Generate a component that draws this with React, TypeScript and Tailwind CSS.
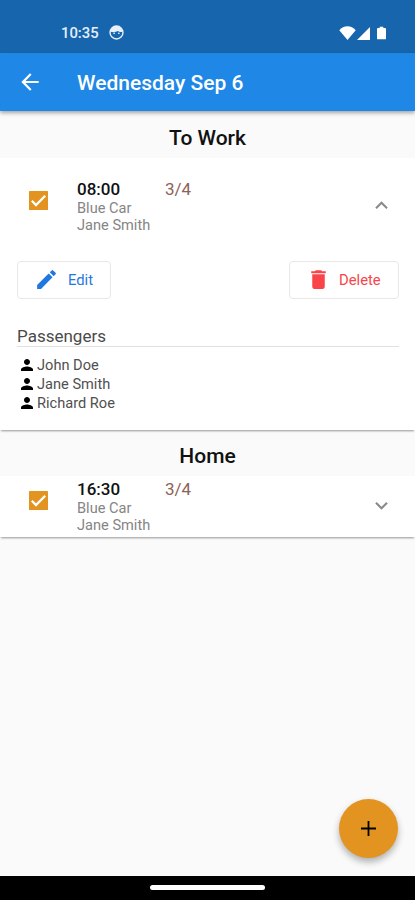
import { MdArrowBack, MdDelete, MdEdit, MdExpandLess, MdExpandMore, MdPerson } from "react-icons/md";

const PASSENGERS = ["John Doe", "Jane Smith", "Richard Roe"];

function StatusBar() {
  return (
    <div className="flex h-[53px] shrink-0 items-center justify-between bg-[#1766ad] pt-[12px] pr-[29px] pl-[61px] text-[#e6effa]">
      <div className="flex items-center gap-[10px]">
        <span className="w-[38px] text-[14.8px] leading-4 font-medium whitespace-nowrap">10:35</span>
        <svg viewBox="0 0 16 16" className="size-[15px]">
          <circle cx="8" cy="8" r="6.9" fill="none" stroke="currentColor" strokeWidth="1.5" />
          <path d="M1.5 7.2C2 3.5 4.5 1 8 1s6 2.500 6.500 6.200c-2.300.5-4 .2-5-.7-2 1.200-5 1.500-8 .7z" fill="currentColor" />
          <circle cx="5.500" cy="8.800" r="0.900" fill="currentColor" />
          <circle cx="10.500" cy="8.800" r="0.900" fill="currentColor" />
        </svg>
      </div>
      <div className="flex items-end text-white">
        <svg viewBox="0 0 17 14" className="h-[14px] w-[17px]" fill="currentColor">
          <path d="M8.500 14 .3 4.300C2.500 1.700 5.300.3 8.500.3s6 1.400 8.200 4z" />
        </svg>
        <svg viewBox="0 0 13 13" className="ml-px h-[13px] w-[13px]" fill="currentColor">
          <path d="M13 0v13H0z" />
        </svg>
        <svg viewBox="0 0 10 14" className="ml-[7px] h-[14px] w-[9px]" fill="currentColor">
          <path d="M3 0h4v1.500h2q1 0 1 1V13q0 1-1 1H1q-1 0-1-1V2.500q0-1 1-1h2z" />
        </svg>
      </div>
    </div>
  );
}

function SectionTitle({ children }: { children: string }) {
  return (
    <h2 className="flex h-[46px] items-center justify-center pt-[7px] text-[21px] font-medium text-[#111]">
      {children}
    </h2>
  );
}

function RideRow({ time, open }: { time: string; open?: boolean }) {
  const Chevron = open ? MdExpandLess : MdExpandMore;
  return (
    <div className="flex h-[61px] items-center pr-[21px] pl-[29px]">
      <svg viewBox="0 0 19 19" className="mb-[12px] size-[19px] shrink-0">
        <rect width="19" height="19" rx="0.600" fill="#e29320" />
        <path d="m2.800 9.800 4.200 4.200 9.200-9.200" fill="none" stroke="#fff" strokeWidth="2.300" />
      </svg>
      <div className="ml-[29px] flex-1">
        <div className="flex h-[22px] items-center text-[17px]">
          <span className="w-[88px] font-medium text-[#111]">{time}</span>
          <span className="text-[#8d6257]">3/4</span>
        </div>
        <div className="-mt-px mb-px text-[14.6px] leading-[17px] text-[#858585]">
          <p>Blue Car</p>
          <p>Jane Smith</p>
        </div>
      </div>
      <Chevron className="mb-[3px] size-[25px] text-[#8a8a8a]" />
    </div>
  );
}

export default function App() {
  return (
    <div className="flex h-[900px] w-[415px] flex-col overflow-hidden bg-[#fafafa] font-['Roboto',sans-serif]">
      <StatusBar />
      <header className="relative z-10 flex h-[58px] shrink-0 items-center bg-[#1f87e5] pl-[17px] text-white shadow-[0_2px_4px_rgba(0,0,0,0.35)]">
        <MdArrowBack className="size-[26px]" />
        <h1 className="ml-[34px] pt-[3px] text-[21px] font-medium">Wednesday Sep 6</h1>
      </header>

      <main className="flex-1">
        <div className="pt-px">
          <SectionTitle>To Work</SectionTitle>
        </div>
        <section className="h-[272px] bg-white pt-[18px] shadow-[0_2px_2px_-1px_rgba(0,0,0,0.4)]">
          <RideRow time="08:00" open />
          <div className="mt-[24px] flex justify-between pr-[16px] pl-[17px]">
            <button className="flex h-[38px] w-[94px] items-center rounded-[4px] border border-[#e8e8e8] pl-[16px] text-[14.8px] text-[#1f78e0]">
              <MdEdit className="mr-[9px] mb-px size-[25px]" />
              Edit
            </button>
            <button className="flex h-[38px] w-[110px] items-center rounded-[4px] border border-[#e8e8e8] pl-[16px] text-[14.8px] text-[#f94449]">
              <MdDelete className="mr-[8px] mb-[2px] size-[25px]" />
              Delete
            </button>
          </div>
          <div className="mr-[16px] ml-[17px] pt-[27px]">
            <h3 className="h-[21px] border-b border-[#e0e0e0] text-[17px] leading-[20px] text-[#4a4a4a]">Passengers</h3>
            <ul className="pt-[9px]">
              {PASSENGERS.map((name) => (
                <li key={name} className="flex h-[19px] items-center text-[14.6px] text-[#505050]">
                  <MdPerson className="mr-px mb-px ml-px size-[18px] text-black" />
                  {name}
                </li>
              ))}
            </ul>
          </div>
        </section>

        <SectionTitle>Home</SectionTitle>
        <section className="bg-white shadow-[0_2px_2px_-1px_rgba(0,0,0,0.4)]">
          <RideRow time="16:30" />
        </section>
      </main>

      <div className="flex shrink-0 justify-end pr-[17px] pb-[18px]">
        <button className="flex size-[59px] items-center justify-center rounded-full bg-[#e29320] text-black shadow-[0_4px_7px_rgba(0,0,0,0.3)]">
          <svg viewBox="0 0 15 15" className="size-[15px]" stroke="currentColor" strokeWidth="1.800">
            <path d="M7.500 0v15M0 7.500h15" />
          </svg>
        </button>
      </div>
      <div className="flex h-[24px] shrink-0 justify-center bg-black pt-[9px]">
        <div className="h-[5px] w-[115px] rounded-full bg-white" />
      </div>
    </div>
  );
}
